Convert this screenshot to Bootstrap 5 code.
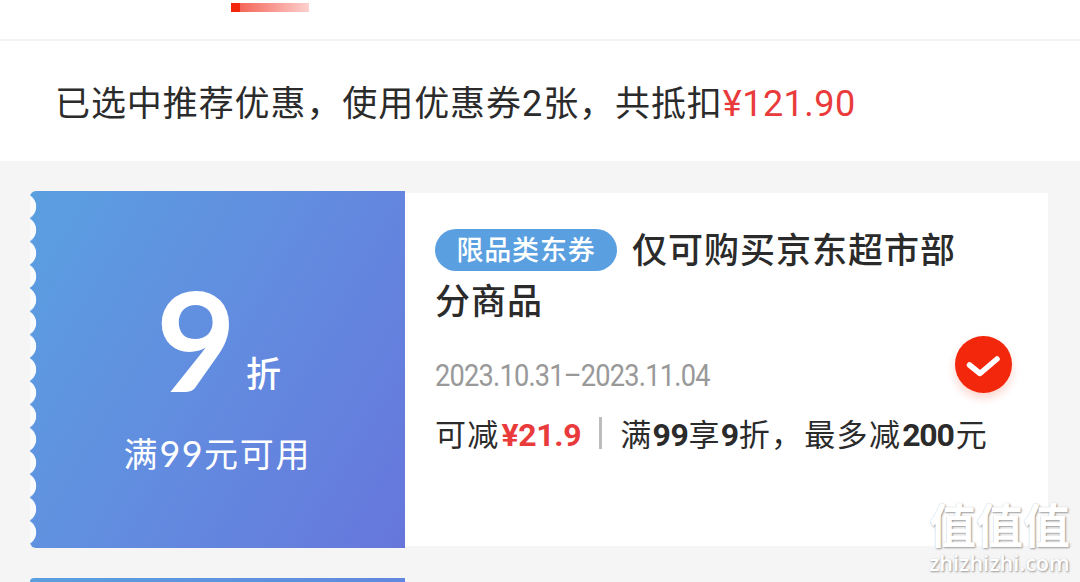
<!DOCTYPE html>
<html lang="zh-CN">

<head>
    <meta charset="UTF-8">
    <meta name="viewport" content="width=device-width, initial-scale=1.0">
    <title>优惠券</title>
    <link href="https://cdn.jsdelivr.net/npm/bootstrap@5.3.0/dist/css/bootstrap.min.css" rel="stylesheet">
    <style>
        body {
            height: 582px;
            background: #f5f5f5;
            color: #2b2b2b;
            font-family: "Noto Sans CJK SC", sans-serif;
        }

        .tab-strip {
            height: 41px;
            padding: 3px 0 0 231px;
            border-bottom: 2px solid #f3f3f3;
        }

        .tab-line {
            width: 78px;
            height: 9px;
            background: linear-gradient(90deg, #f2270c 9px, #f5665a 9px, #fcd0ce);
        }

        .summary {
            height: 120px;
            padding: 4px 56px 0 55px;
            font-size: 35px;
            letter-spacing: .92px;
        }

        .num {
            font-family: Roboto, sans-serif;
        }

        .price {
            color: #e93b3b;
        }

        .summary .num {
            font-size: 36px;
        }

        .summary .price {
            letter-spacing: .5px;
        }

        .coupon-list {
            height: 421px;
            padding: 30px 32px 0 30px;
            gap: 30px;
        }

        .coupon {
            height: 357px;
        }

        .coupon-next {
            height: 4px;
        }

        .coupon-left {
            width: 375px;
            flex: none;
            border-radius: 6px 0 0 6px;
            background: linear-gradient(120deg, #5a9fe0, #6190e0 40%, #6678dc 97%, #6873d9);
            overflow: hidden;
        }

        .coupon-next .coupon-left {
            border-radius: 6px 0 0 0;
            background: linear-gradient(90deg, #5a9fe0, #6188df);
        }

        /* scalloped ticket edge */
        .scallop::before {
            content: "";
            position: absolute;
            left: 0;
            top: 4px;
            width: 7px;
            height: 349px;
            background: radial-gradient(circle at -7px 50%, #f9fbfd 12.8px, transparent 13.6px) 0 0 / 7px 23.27px;
        }

        .discount {
            height: 142px;
            margin-top: 77px;
            padding-left: 2px;
            gap: 10px;
        }

        .discount-num {
            font: 700 138px/142px Lato, sans-serif;
        }

        .discount-unit {
            margin-bottom: 13px;
            font-size: 35px;
            line-height: 50px;
            font-weight: 500;
        }

        .condition {
            margin-top: 18px;
            font-size: 34px;
            line-height: 50px;
            letter-spacing: 1.8px;
        }

        .condition .lat {
            font-family: Lato, sans-serif;
            font-size: 36px;
            letter-spacing: 1.4px;
        }

        .coupon-right {
            height: 353px;
            margin-top: 2px;
            padding: 29px 20px 0 30px;
        }

        .coupon-title {
            width: 540px;
            font-size: 35px;
            line-height: 51px;
            letter-spacing: 1px;
            font-weight: 500;
        }

        .kind {
            display: inline-block;
            width: 182px;
            height: 42px;
            margin-right: 15px;
            border-radius: 21px;
            background: #5a9fe0;
            color: #fff;
            font-size: 27px;
            line-height: 40px;
            letter-spacing: .8px;
            text-align: center;
            vertical-align: 3px;
        }

        .dates {
            margin-top: 32px;
            color: #999;
            font-size: 30.5px;
            line-height: 40px;
            letter-spacing: -.9px;
            transform: scaleX(.893);
            transform-origin: left;
        }

        .rules {
            margin-top: 14px;
            font-size: 31px;
            line-height: 46px;
            letter-spacing: 1.3px;
        }

        .rules .num {
            font-weight: 700;
            font-size: 32px;
            letter-spacing: -.4px;
        }

        .rules .price {
            margin-left: 2px;
        }

        .rules .cap {
            margin: 0 2px 0 1px;
            letter-spacing: -1.2px;
        }

        .pause {
            margin-right: 1px;
        }

        .rule-sep {
            width: 3px;
            height: 32px;
            margin: -3px 18px 0 18px;
            background: #bdbdbd;
        }

        .checked {
            right: 36px;
            top: 143px;
            width: 57px;
            height: 57px;
            box-shadow: 0 5px 10px rgba(242, 39, 12, .2);
            background: #f2270c;
        }

        .checked svg {
            display: block;
        }

        .watermark {
            left: 929px;
            top: 494px;
            color: #fff;
            text-shadow: 1px 1px 2px #999, 0 0 1px #ccc;
            white-space: nowrap;
        }

        .wm-name {
            font-size: 47px;
            line-height: 58px;
            font-weight: 700;
        }

        .wm-url {
            font: 600 21.6px/22px "Open Sans", sans-serif;
        }
    </style>
</head>

<body class="overflow-hidden position-relative">
    <header class="bg-white">
        <div class="tab-strip">
            <div class="tab-line"></div>
        </div>
        <div class="summary d-flex align-items-center text-nowrap">
            <div>已选中推荐优惠，使用优惠券<span class="num">2</span>张，共抵扣<span class="num price">¥121.90</span></div>
        </div>
    </header>

    <main class="coupon-list d-flex flex-column">
        <section class="coupon d-flex flex-shrink-0">
            <div class="coupon-left scallop position-relative text-white text-center">
                <div class="discount d-flex justify-content-center align-items-end">
                    <span class="discount-num">9</span>
                    <span class="discount-unit">折</span>
                </div>
                <div class="condition">满<span class="lat">99</span>元可用</div>
            </div>
            <div class="coupon-right position-relative bg-white flex-grow-1">
                <div class="coupon-title"><span class="kind">限品类东券</span>仅可购买京东超市部分商品</div>
                <div class="dates num">2023.10.31–2023.11.04</div>
                <div class="rules d-flex align-items-center text-nowrap">
                    <div>可减<span class="num price">¥21.9</span></div>
                    <div class="rule-sep"></div>
                    <div>满<span class="num">99</span>享<span class="num">9</span>折<span class="pause">，</span>最多减<span class="num cap">200</span>元</div>
                </div>
                <div class="checked position-absolute rounded-circle">
                    <svg width="57" height="57" viewBox="0 0 57 57" fill="none" stroke="#fff" stroke-width="5.5" stroke-linecap="round" stroke-linejoin="round">
                        <path d="M14.5 29l10.5 8.500L42 23" />
                    </svg>
                </div>
            </div>
        </section>
        <section class="coupon-next d-flex">
            <div class="coupon-left"></div>
        </section>
    </main>

    <div class="watermark position-absolute">
        <div class="wm-name">值值值</div>
        <div class="wm-url">zhizhizhi.com</div>
    </div>

    <script src="https://cdn.jsdelivr.net/npm/bootstrap@5.3.0/dist/js/bootstrap.bundle.min.js"></script>
</body>

</html>
